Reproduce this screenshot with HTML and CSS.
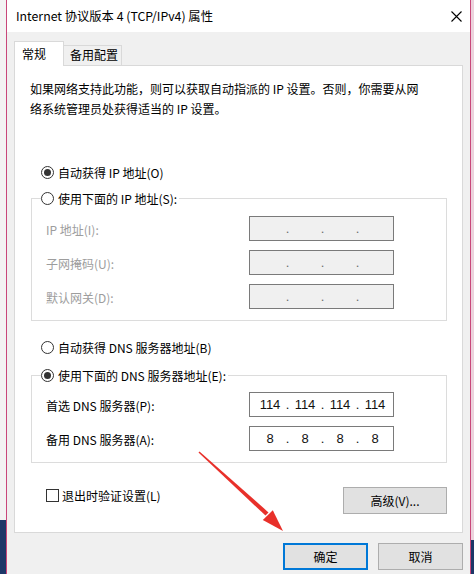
FILE: index.html
```html
<!DOCTYPE html>
<html lang="zh-CN">
<head>
  <meta charset="UTF-8" />
  <meta name="viewport" content="width=device-width, initial-scale=1.0"/>
  <title>Internet 协议版本 4 (TCP/IPv4) 属性</title>
  <link rel="stylesheet" href="styles.css">
</head>
<body>
  <div class="screen">
    <div class="side side-left">
      <div class="taskbar"></div>
    </div>

    <div class="dialog">
      <div class="titlebar">
        <span class="title">Internet 协议版本 4 (TCP/IPv4) 属性</span>
        <svg class="close" width="11" height="11" viewBox="0 0 11 11">
          <path d="M0.5 0.5 L10.5 10.5 M10.5 0.5 L0.5 10.5" stroke="#000" stroke-width="1.1" fill="none"/>
        </svg>
      </div>

      <div class="body">
        <div class="tabs">
          <div class="tab active">常规</div>
          <div class="tab">备用配置</div>
        </div>

        <div class="panel">
          <p class="desc">如果网络支持此功能，则可以获取自动指派的 IP 设置。否则，你需要从网<br>络系统管理员处获得适当的 IP 设置。</p>

          <div class="radio-row first"><span class="radio checked"></span>自动获得 IP 地址(O)</div>

          <fieldset class="group group-ip">
            <legend><span class="radio"></span>使用下面的 IP 地址(S):</legend>
            <div class="field disabled">
              <span class="field-label">IP 地址(I):</span>
              <div class="ip-box"><span class="seg"></span><span class="dot">.</span><span class="seg"></span><span class="dot">.</span><span class="seg"></span><span class="dot">.</span><span class="seg"></span></div>
            </div>
            <div class="field disabled">
              <span class="field-label">子网掩码(U):</span>
              <div class="ip-box"><span class="seg"></span><span class="dot">.</span><span class="seg"></span><span class="dot">.</span><span class="seg"></span><span class="dot">.</span><span class="seg"></span></div>
            </div>
            <div class="field disabled">
              <span class="field-label">默认网关(D):</span>
              <div class="ip-box"><span class="seg"></span><span class="dot">.</span><span class="seg"></span><span class="dot">.</span><span class="seg"></span><span class="dot">.</span><span class="seg"></span></div>
            </div>
          </fieldset>

          <div class="radio-row second"><span class="radio"></span>自动获得 DNS 服务器地址(B)</div>

          <fieldset class="group group-dns">
            <legend><span class="radio checked"></span>使用下面的 DNS 服务器地址(E):</legend>
            <div class="field">
              <span class="field-label">首选 DNS 服务器(P):</span>
              <div class="ip-box"><span class="seg">114</span><span class="dot">.</span><span class="seg">114</span><span class="dot">.</span><span class="seg">114</span><span class="dot">.</span><span class="seg">114</span></div>
            </div>
            <div class="field">
              <span class="field-label">备用 DNS 服务器(A):</span>
              <div class="ip-box"><span class="seg">8</span><span class="dot">.</span><span class="seg">8</span><span class="dot">.</span><span class="seg">8</span><span class="dot">.</span><span class="seg">8</span></div>
            </div>
          </fieldset>

          <div class="panel-footer">
            <div class="check-row"><span class="checkbox"></span>退出时验证设置(L)</div>
            <button class="btn advanced">高级(V)...</button>
          </div>
        </div>

        <div class="actions">
          <button class="btn default">确定</button>
          <button class="btn">取消</button>
        </div>
      </div>
    </div>

    <div class="side side-right">
      <div class="taskbar"></div>
    </div>

    <!-- red annotation arrow on top of the screenshot -->
    <svg class="arrow" width="474" height="574" viewBox="0 0 474 574">
      <polygon points="198.5,452.6 199.5,451.4 268.5,512.4 265.5,515.6" fill="#e8302a"/>
      <polygon points="283,531 262.8,519.9 272.8,510.3" fill="#e8302a"/>
    </svg>
  </div>
</body>
</html>
```

FILE: styles.css
```css
:root {
  --dialog-bg: #f0f0f0;
  --frame: #c9477a;
  --line: #d9d9d9;
  --group-line: #dcdcdc;
  --box-border: #7a7a7a;
  --btn-bg: #e1e1e1;
  --btn-border: #adadad;
  --accent: #0078d7;
  --disabled: #9d9d9d;
  --taskbar: #1d3768;
}

html, body {
  margin: 0;
  padding: 0;
}

body {
  width: 474px;
  height: 574px;
  overflow: hidden;
  font-family: "Noto Sans CJK SC", "Noto Sans", sans-serif;
  font-size: 12px;
  color: #000;
  background: #f2f2f2;
}

.screen {
  position: relative;
  display: flex;
  height: 574px;
}

/* strips of the windows behind the dialog */
.side {
  display: flex;
  flex-direction: column;
}

.side-left {
  width: 6px;
  background: #f3f3f3;
}

.side-right {
  width: 3px;
  background: #ecd3dd;
}

.side-left .taskbar {
  margin-top: auto;
  height: 54px;
  background: var(--taskbar);
}

.side-right .taskbar {
  margin-top: auto;
  height: 34px;
  background: var(--taskbar);
}

/* dialog */
.dialog {
  width: 463px;
  border-left: 1px solid var(--frame);
  border-right: 1px solid var(--frame);
  display: flex;
  flex-direction: column;
  background: var(--dialog-bg);
}

.titlebar {
  height: 32px;
  background: #fff;
  display: flex;
  align-items: center;
  justify-content: space-between;
  padding: 0 8px 0 9px;
}

.title {
  line-height: 16px;
  font-size: 12.3px;
}

.close {
  display: block;
}

.body {
  flex: 1;
  display: flex;
  flex-direction: column;
  padding: 9px 7px 0;
}

.tabs {
  display: flex;
  align-items: flex-end;
  height: 24px;
}

.tab {
  box-sizing: border-box;
  height: 20px;
  width: 58px;
  padding-left: 6px;
  line-height: 18px;
  border-top: 1px solid var(--line);
  border-right: 1px solid var(--line);
  background: var(--dialog-bg);
}

.tab.active {
  position: relative;
  z-index: 1;
  width: 50px;
  height: 25px;
  margin-bottom: -1px;
  padding-left: 7px;
  line-height: 23px;
  border-left: 1px solid var(--line);
  background: #fff;
}

.panel {
  box-sizing: border-box;
  height: 468px;
  background: #fff;
  border: 1px solid var(--line);
  padding: 13px 15px 0 16px;
}

.desc {
  margin: 0 0 0 -1px;
  line-height: 20px;
}

.radio-row {
  display: flex;
  align-items: center;
  gap: 4px;
  height: 20px;
  margin-left: 10px;
}

.radio-row.first { margin-top: 43px; }
.radio-row.second { margin-top: 16px; }

.radio {
  box-sizing: border-box;
  width: 13px;
  height: 13px;
  border: 1px solid #333;
  border-radius: 50%;
  background: #fff;
  display: flex;
  align-items: center;
  justify-content: center;
}

.radio.checked::after {
  content: "";
  width: 7px;
  height: 7px;
  border-radius: 50%;
  background: #333;
}

.group {
  margin: 6px 0 0;
  padding: 8px 0 11px 9px;
  border: 1px solid var(--group-line);
  min-width: 0;
}

.group-dns {
  margin-top: 8px;
  padding-top: 7px;
}

.group legend {
  display: flex;
  align-items: center;
  gap: 4px;
  height: 20px;
  padding: 0 2px 0 0;
}

.field {
  display: flex;
  align-items: center;
  height: 25px;
  margin-left: 5px;
}

.field + .field {
  margin-top: 9px;
}

.field-label {
  width: 203px;
  padding-top: 2px;
}

.field.disabled .field-label {
  color: var(--disabled);
}

.ip-box {
  box-sizing: border-box;
  width: 145px;
  height: 25px;
  border: 1px solid var(--box-border);
  background: #fff;
  display: flex;
  align-items: center;
  padding-left: 7px;
  font-family: "Liberation Sans", "Noto Sans CJK SC", sans-serif;
  font-size: 13px;
  color: #111;
}

.field.disabled .ip-box {
  background: var(--dialog-bg);
  color: #6d6d6d;
}

.seg {
  width: 26px;
  text-align: center;
}

.dot {
  width: 9px;
  text-align: center;
}

.panel-footer {
  display: flex;
  justify-content: space-between;
  margin-top: 24px;
}

.check-row {
  display: flex;
  align-items: center;
  gap: 3px;
  height: 13px;
  margin: 2px 0 0 15px;
}

.checkbox {
  box-sizing: border-box;
  width: 13px;
  height: 13px;
  border: 1px solid #333;
  background: #fff;
}

.btn {
  box-sizing: border-box;
  height: 27px;
  width: 85px;
  border: 1px solid var(--btn-border);
  background: var(--btn-bg);
  font-family: inherit;
  font-size: 12px;
  color: #000;
  padding: 0;
}

.btn.advanced {
  width: 104px;
}

.btn.default {
  border: 2px solid var(--accent);
}

.actions {
  display: flex;
  justify-content: flex-end;
  gap: 10px;
  margin-top: 10px;
}

.arrow {
  position: absolute;
  left: 0;
  top: 0;
  pointer-events: none;
}
```
